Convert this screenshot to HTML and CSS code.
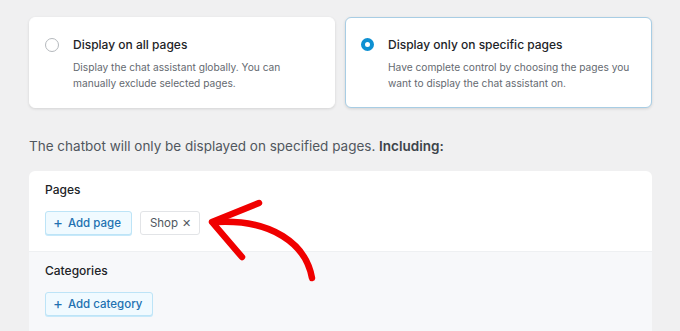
FILE: index.html
```html
<!DOCTYPE html>
<html lang="en">

<head>
    <meta charset="UTF-8">
    <meta name="viewport" content="width=device-width, initial-scale=1.0">
    <title>Chatbot display rules</title>
    <link rel="stylesheet" href="styles.css">
</head>

<body>
    <div class="page">
        <!-- display options -->
        <div class="options">
            <label class="option">
                <span class="radio"></span>
                <span class="option-text">
                    <span class="option-title">Display on all pages</span>
                    <span class="option-desc">Display the chat assistant globally. You can manually exclude selected pages.</span>
                </span>
            </label>
            <label class="option selected">
                <span class="radio"></span>
                <span class="option-text">
                    <span class="option-title">Display only on specific pages</span>
                    <span class="option-desc">Have complete control by choosing the pages you want to display the chat assistant on.</span>
                </span>
            </label>
        </div>

        <p class="intro">The chatbot will only be displayed on specified pages. <strong>Including:</strong></p>

        <!-- rules -->
        <div class="rules">
            <div class="rule">
                <div class="rule-label">Pages</div>
                <div class="rule-items">
                    <button class="add-btn"><span class="plus">+</span> Add page</button>
                    <span class="chip">Shop <span class="chip-x">&#x2715;</span></span>
                </div>
            </div>
            <div class="rule alt">
                <div class="rule-label">Categories</div>
                <div class="rule-items">
                    <button class="add-btn"><span class="plus">+</span> Add category</button>
                </div>
            </div>
        </div>
    </div>

    <!-- hand drawn arrow -->
    <svg class="arrow" width="680" height="331" viewBox="0 0 680 331">
        <path d="M312 278 C306 244 272 219 216 222" />
        <path d="M259 203 L212 222 L242 257" />
    </svg>
</body>

</html>
```

FILE: styles.css
```css
body {
    margin: 0;
    background: #f0f0f1;
    font-family: Inter, "Noto Sans", sans-serif;
    color: #1d2327;
    position: relative;
    overflow: hidden;
    height: 331px;
}

.page {
    padding: 17px 28px 0 29px;
}

/* option cards */
.options {
    display: grid;
    grid-template-columns: 306px 307px;
    gap: 10px;
}

.option {
    display: flex;
    gap: 14px;
    background: #fff;
    border: 1px solid #fff;
    border-radius: 6px;
    padding: 18px 12px 0 15px;
    height: 71px;
    box-shadow: 0 1px 3px rgba(0, 0, 0, 0.12);
}

.option.selected {
    border-color: #a8cde4;
}

.radio {
    flex: none;
    width: 12px;
    height: 12px;
    margin-top: 2px;
    border: 1px solid #b5b9bd;
    border-radius: 50%;
    background: #fff;
}

.selected .radio {
    width: 5px;
    height: 5px;
    border: 4.5px solid #0e90d2;
}

.option-text {
    display: flex;
    flex-direction: column;
}

.option-title {
    font-size: 12px;
    font-weight: 500;
    line-height: 18px;
    color: #1d2327;
}

.option-desc {
    margin-top: 5px;
    font-size: 10.2px;
    line-height: 16px;
    color: #646970;
}

.intro {
    margin: 29px 0 16px;
    font-size: 13.5px;
    color: #50575e;
    line-height: 18px;
}

.intro strong {
    color: #3c434a;
    font-weight: 600;
}

/* rules card */
.rules {
    background: #fff;
    border-radius: 6px;
    overflow: hidden;
}

.rule {
    padding: 11px 16px 16px;
    border-bottom: 1px solid #eef0f2;
}

.rule.alt {
    background: #f7f8fa;
    padding-bottom: 20px;
}

.rule-label {
    font-size: 12px;
    font-weight: 500;
    line-height: 16px;
    color: #1d2327;
    margin-bottom: 13px;
}

.rule-items {
    display: flex;
    gap: 8px;
}

.add-btn {
    display: flex;
    align-items: center;
    gap: 5px;
    height: 24px;
    padding: 0 10px 0 7px;
    background: #f0faff;
    border: 1px solid #bde4f7;
    border-radius: 3px;
    font-family: inherit;
    font-size: 11.5px;
    font-weight: 500;
    color: #2271b1;
    box-shadow: 0 1px 0 #c7e9fa;
}

.plus {
    font-size: 15px;
    font-weight: 400;
    line-height: 1;
    margin-top: -2px;
}

.chip {
    display: flex;
    align-items: center;
    gap: 4px;
    height: 22px;
    padding: 0 8px 0 9px;
    background: #fff;
    border: 1px solid #e2e4e7;
    border-radius: 3px;
    font-size: 11.5px;
    color: #50575e;
}

.chip-x {
    font-size: 11px;
    font-weight: 300;
}

/* red arrow on top */
.arrow {
    position: absolute;
    top: 0;
    left: 0;
    pointer-events: none;
}

.arrow path {
    fill: none;
    stroke: #f00000;
    stroke-width: 6.5;
    stroke-linecap: round;
    stroke-linejoin: round;
}
```
